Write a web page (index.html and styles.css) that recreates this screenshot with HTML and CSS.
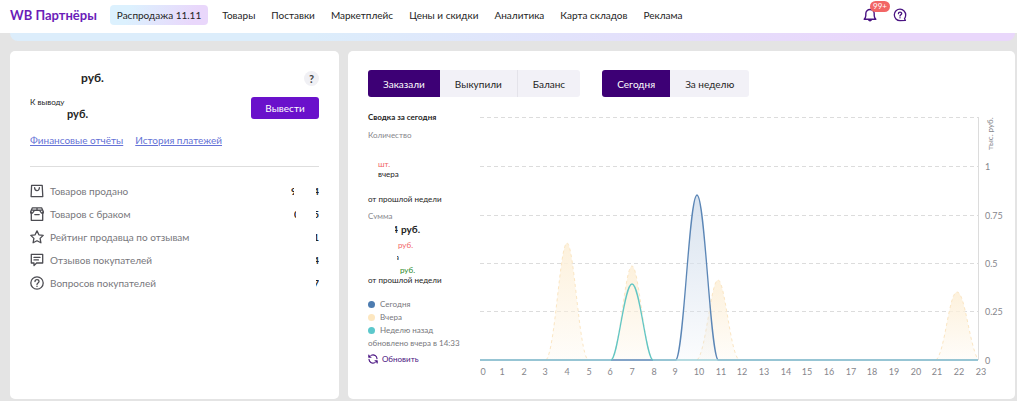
FILE: index.html
```html
<!DOCTYPE html>
<html lang="ru">

<head>
  <meta charset="UTF-8" />
  <meta name="viewport" content="width=device-width, initial-scale=1.0" />
  <title>WB Партнёры</title>
  <link rel="stylesheet" href="styles.css">
</head>

<body>
  <header class="header">
    <a href="#" class="logo">WB Партнёры</a>
    <nav class="nav">
      <a href="#" class="nav-sale">Распродажа 11.11</a>
      <a href="#">Товары</a>
      <a href="#">Поставки</a>
      <a href="#">Маркетплейс</a>
      <a href="#">Цены и скидки</a>
      <a href="#">Аналитика</a>
      <a href="#">Карта складов</a>
      <a href="#">Реклама</a>
    </nav>
    <div class="header-actions">
      <button class="icon-button" aria-label="Уведомления">
        <svg width="14" height="14" viewBox="0 0 14 14" fill="none" stroke="#4a1482" stroke-width="1.4" stroke-linejoin="round">
          <path d="M1.2 11.3C2.3 10.2 2.8 9.2 2.8 7.6V5.7C2.8 3.2 4.6 1.5 7 1.5S11.2 3.2 11.2 5.7V7.6C11.2 9.2 11.7 10.2 12.8 11.3Z" />
          <path d="M5.4 11.8C5.6 13.4 8.4 13.4 8.6 11.8Z" fill="#4a1482" stroke-width="1" />
        </svg>
        <span class="badge">99+</span>
      </button>
      <button class="icon-button" aria-label="Помощь">
        <svg width="14" height="14" viewBox="0 0 14 14" fill="none" stroke="#4a1482" stroke-width="1.3" stroke-linejoin="round" stroke-linecap="round">
          <path d="M12.4 12.4L7 12.6A5.7 5.7 0 1 1 12.7 7C12.7 8.6 12.2 9.8 11.5 10.8Z" />
          <path d="M5.4 5.7C5.4 3.5 8.7 3.6 8.7 5.6C8.7 6.8 7 6.9 7 8.1M7 9.7V9.8" />
        </svg>
      </button>
    </div>
  </header>

  <div class="banner"></div>

  <main class="main">
    <section class="card finance">
      <div class="balance">
        <span class="balance-total">руб.</span>
        <button class="hint" aria-label="Подсказка">?</button>
      </div>
      <div class="payout">
        <div>
          <p class="payout-label">К выводу</p>
          <p class="payout-sum">руб.</p>
        </div>
        <button class="payout-button">Вывести</button>
      </div>
      <div class="links">
        <a href="#">Финансовые отчёты</a>
        <a href="#">История платежей</a>
      </div>
      <ul class="stats">
        <li>
          <svg class="stat-icon" viewBox="0 0 14 14">
            <path d="M1.6 1.3H12.2L12.8 12.6H1.1Z" />
            <path d="M4.6 3.6C4.6 7.6 9.4 7.6 9.4 3.6" />
          </svg>
          <span class="stat-name">Товаров продано</span>
          <span class="digit digit-wide">9</span><span class="digit">4</span>
        </li>
        <li>
          <svg class="stat-icon" viewBox="0 0 14 14">
            <path d="M1.3 5V13.3H12.7V5M0.7 4.6L2.4 0.8H11.6L13.3 4.6V6H11.4L9.6 3.4H4.4L2.6 6H0.7ZM2 3.2H12M7 0.8V3.2M4.8 7.6H9.2" />
          </svg>
          <span class="stat-name">Товаров с браком</span>
          <span class="digit digit-near">0</span><span class="digit">5</span>
        </li>
        <li>
          <svg class="stat-icon" viewBox="0 0 14 14">
            <path d="M7 0.9L8.9 4.8L13.2 5.4L10.1 8.4L10.9 12.8L7 10.7L3.1 12.8L3.9 8.4L0.8 5.4L5.1 4.8Z" />
          </svg>
          <span class="stat-name">Рейтинг продавца по отзывам</span>
          <span class="digit">1</span>
        </li>
        <li>
          <svg class="stat-icon" viewBox="0 0 14 14">
            <path d="M1.3 1.3H12.7V10H6.6L4 12.6V10H1.3ZM4 4.4H10M4 6.9H8.4" />
          </svg>
          <span class="stat-name">Отзывов покупателей</span>
          <span class="digit">4</span>
        </li>
        <li>
          <svg class="stat-icon" viewBox="0 0 14 14">
            <circle cx="7" cy="7" r="6.2" />
            <path d="M5 5.6C5 3 9 3.1 9 5.5C9 7 7 7 7 8.4M7 10.2V10.4" />
          </svg>
          <span class="stat-name">Вопросов покупателей</span>
          <span class="digit">7</span>
        </li>
      </ul>
    </section>

    <section class="card report">
      <div class="tabs">
        <div class="tab-group">
          <button class="tab active">Заказали</button>
          <button class="tab">Выкупили</button>
          <button class="tab divided">Баланс</button>
        </div>
        <div class="tab-group">
          <button class="tab active">Сегодня</button>
          <button class="tab">За неделю</button>
        </div>
      </div>

      <div class="report-body">
        <div class="summary">
          <h2 class="summary-title">Сводка за сегодня</h2>
          <p class="muted">Количество</p>
          <div class="count">
            <p class="down">шт.</p>
            <p>вчера</p>
          </div>
          <p class="compare">от прошлой недели</p>
          <p class="muted sum-label">Сумма</p>
          <p class="sum"><span class="digit">4</span>руб.</p>
          <div class="diff">
            <p class="down">руб.</p>
            <p class="cut-word">вчера</p>
            <p class="up">руб.</p>
          </div>
          <p class="compare-sum">от прошлой недели</p>
          <ul class="legend">
            <li class="today">Сегодня</li>
            <li class="yesterday">Вчера</li>
            <li class="week">Неделю назад</li>
          </ul>
          <p class="updated">обновлено вчера в 14:33</p>
          <button class="refresh">
            <svg width="10" height="10" viewBox="0 0 10 10" fill="none" stroke="#4a1482" stroke-width="1.1" stroke-linecap="round" stroke-linejoin="round">
              <path d="M3.4 1.2C6.2 0.2 8.8 2 9 4.6M6.6 8.8C3.8 9.8 1.2 8 1 5.4M0.8 1V3.2H3M0.9 3.1L2.2 1.8M9.2 9V6.8H7M9.1 6.9L7.8 8.2" />
            </svg>
            Обновить
          </button>
        </div>

        <svg class="chart" viewBox="0 0 525 272" role="img" aria-label="Заказы по часам">
          <defs>
            <linearGradient id="fill-yesterday" x1="0" y1="0" x2="0" y2="1">
              <stop offset="0" stop-color="#fdf1dc" />
              <stop offset="1" stop-color="#fdf1dc" stop-opacity="0.15" />
            </linearGradient>
            <linearGradient id="fill-today" x1="0" y1="0" x2="0" y2="1">
              <stop offset="0" stop-color="#d9e3ef" />
              <stop offset="1" stop-color="#d9e3ef" stop-opacity="0.1" />
            </linearGradient>
          </defs>
          <g class="grid">
            <path d="M0 10.5H498M0 59.5H498M0 108.5H498M0 156.5H498M0 204.5H498" />
          </g>
          <path class="axis" d="M498.5 10V253" />

          <g class="area-yesterday">
            <path d="M66 253C75 246 80 136 87 136S99 246 108 253" />
            <path d="M131 253C140 246 145 159 152 159S164 246 173 253" />
            <path d="M217 253C226 246 231 173 238 173S250 246 259 253" />
            <path d="M456 253C465 246 469 185 477 185S489 236 498 253" />
          </g>
          <path class="area-today" d="M196 253C204 246 209 88 217 88S230 246 238 253" />
          <path class="line-today" d="M0 253H196C204 246 209 88 217 88S230 246 238 253H498" />
          <path class="line-week" d="M131 253C138 252 144 177 152 177S166 252 173 253" />
          <path class="line-base" d="M0 253H131M173 253H498" />

          <g class="hours">
            <text x="3" y="268">0</text>
            <text x="22" y="268">1</text>
            <text x="44" y="268">2</text>
            <text x="65" y="268">3</text>
            <text x="87" y="268">4</text>
            <text x="109" y="268">5</text>
            <text x="130" y="268">6</text>
            <text x="152" y="268">7</text>
            <text x="174" y="268">8</text>
            <text x="195" y="268">9</text>
            <text x="219" y="268">10</text>
            <text x="241" y="268">11</text>
            <text x="262" y="268">12</text>
            <text x="284" y="268">13</text>
            <text x="306" y="268">14</text>
            <text x="327" y="268">15</text>
            <text x="349" y="268">16</text>
            <text x="371" y="268">17</text>
            <text x="392" y="268">18</text>
            <text x="414" y="268">19</text>
            <text x="436" y="268">20</text>
            <text x="457" y="268">21</text>
            <text x="479" y="268">22</text>
            <text x="501" y="268">23</text>
          </g>
          <g class="scale">
            <text x="505" y="63">1</text>
            <text x="505" y="112">0.75</text>
            <text x="505" y="160">0.5</text>
            <text x="505" y="208">0.25</text>
            <text x="505" y="257">0</text>
            <text class="unit" transform="translate(513 43) rotate(-90)">тыс. руб.</text>
          </g>
        </svg>
      </div>
    </section>
  </main>
</body>

</html>
```

FILE: styles.css
```css
* {
  box-sizing: border-box;
}

body {
  margin: 0;
  background-color: #e4e4e4;
  font-family: Lato, "Noto Sans", sans-serif;
  font-size: 8px;
  line-height: 12px;
  color: #242424;
}

p,
h2,
ul {
  margin: 0;
  padding: 0;
}

ul {
  list-style: none;
}

button {
  font-family: inherit;
  border: none;
  padding: 0;
  cursor: pointer;
}

/* header */
.header {
  display: flex;
  align-items: center;
  height: 33px;
  padding: 0 110px 3px 10px;
  background-color: #fff;
}

.logo {
  font-size: 13px;
  font-weight: 700;
  color: #6a1cb8;
  text-decoration: none;
}

.nav {
  display: flex;
  align-items: center;
  gap: 16px;
  margin-left: 13px;
  font-size: 10px;
  white-space: nowrap;
}

.nav a {
  color: #242424;
  text-decoration: none;
}

.nav .nav-sale {
  padding: 4px 7px;
  margin-right: -2px;
  border-radius: 4px;
  background: linear-gradient(110deg, #dcf1fe 20%, #e9d7fb 85%);
}

.header-actions {
  display: flex;
  gap: 16px;
  margin-left: auto;
}

.icon-button {
  position: relative;
  display: flex;
  background: none;
}

.badge {
  position: absolute;
  top: -7px;
  left: 7px;
  padding: 0 3px;
  border-radius: 6px;
  background-color: #f26666;
  color: #fff;
  font-size: 8px;
  line-height: 11px;
}

.banner {
  height: 8px;
  margin: 0 2px 0 10px;
  border-radius: 0 0 8px 8px;
  background: linear-gradient(90deg, #dcedfb 30%, #e9d7fb 85%);
}

/* cards */
.main {
  display: grid;
  grid-template-columns: 329fr 667fr;
  gap: 9px;
  padding: 10px 2px 3px 10px;
}

.card {
  border-radius: 5px;
  background-color: #fff;
}

.finance {
  padding: 19px 20px;
}

.balance {
  display: flex;
  align-items: center;
  justify-content: space-between;
}

.balance-total {
  padding-left: 51px;
  font-size: 12px;
  line-height: 16px;
  font-weight: 700;
}

.hint {
  width: 15px;
  height: 15px;
  border-radius: 50%;
  background-color: #f0f0f4;
  color: #444;
  font-size: 11px;
  font-weight: 700;
  line-height: 15px;
}

.payout {
  display: flex;
  align-items: center;
  justify-content: space-between;
  margin-top: 10px;
}

.payout-sum {
  padding-left: 37px;
  font-size: 11px;
  font-weight: 700;
}

.payout-button {
  width: 68px;
  height: 22px;
  border-radius: 3px;
  background-color: #6a11cb;
  color: #fff;
  font-size: 10px;
}

.links {
  display: flex;
  gap: 12px;
  padding: 14px 0 20px;
  border-bottom: 1px solid #dedede;
  font-size: 10px;
}

.links a {
  color: #6572d6;
}

.stats {
  padding-top: 12px;
  font-size: 10px;
  color: #77777c;
}

.stats li {
  display: flex;
  align-items: center;
  height: 23px;
}

.stat-icon {
  width: 14px;
  height: 14px;
  margin-right: 6px;
  fill: none;
  stroke: #4c4c52;
  stroke-width: 1.3;
  stroke-linejoin: round;
  stroke-linecap: round;
}

.stat-name {
  margin-right: auto;
}

/* numbers are hidden except for their edges */
.digit {
  display: flex;
  justify-content: flex-end;
  width: 3px;
  overflow: hidden;
  color: #242424;
  font-weight: 700;
}

.digit-wide,
.digit-near {
  justify-content: flex-start;
  margin-right: 22px;
}

.digit-near {
  width: 2px;
  margin-right: 20px;
}

/* report */
.report {
  padding: 19px 10px 20px 20px;
}

.tabs {
  display: flex;
  gap: 22px;
}

.tab-group {
  display: flex;
  border-radius: 3px;
  overflow: hidden;
}

.tab {
  height: 27px;
  padding: 0 15px;
  background-color: #f2f1f7;
  color: #242424;
  font-size: 10px;
}

.tab.active {
  background-color: #3d0075;
  color: #fff;
}

.tab.divided {
  border-left: 1px solid #e4e3ea;
}

.report-body {
  display: grid;
  grid-template-columns: 112px 1fr;
  align-items: start;
  padding-top: 10px;
}

.summary {
  display: flex;
  flex-direction: column;
  padding-top: 4px;
  white-space: nowrap;
}

.summary-title {
  margin-bottom: 6px;
  font-size: 8px;
  font-weight: 700;
}

.muted {
  color: #86868c;
}

.count {
  padding: 18px 0 0 10px;
  line-height: 10px;
}

.down {
  color: #f26666;
}

.up {
  color: #2c8a2c;
}

.compare {
  margin-top: 14px;
}

.sum-label {
  height: 9px;
  margin-top: 5px;
  overflow: hidden;
}

.sum {
  display: flex;
  gap: 3px;
  padding: 4px 0 3px 27px;
  font-size: 10px;
  font-weight: 700;
}

.diff {
  padding: 1px 0 0 30px;
}

.cut-word {
  display: flex;
  justify-content: flex-end;
  width: 2px;
  margin-left: -1px;
  overflow: hidden;
}

.diff .up {
  padding: 1px 0 0 2px;
}

.compare-sum {
  position: relative;
  margin-top: -2px;
}

.compare-sum::before {
  content: "";
  position: absolute;
  top: -4px;
  left: 9px;
  width: 18px;
  height: 9px;
  border-radius: 50%;
  background-color: #fff;
}

.legend {
  padding-top: 12px;
  line-height: 13px;
  color: #77777c;
}

.legend li {
  display: flex;
  align-items: center;
  gap: 5px;
}

.legend li::before {
  content: "";
  width: 7px;
  height: 7px;
  border-radius: 50%;
}

.legend .today::before {
  background-color: #4d7cb0;
}

.legend .yesterday::before {
  background-color: #fde7c0;
}

.legend .week::before {
  background-color: #5cc8cc;
}

.updated {
  color: #77777c;
}

.refresh {
  display: flex;
  align-items: center;
  gap: 4px;
  margin-top: 4px;
  background: none;
  color: #4a1482;
  font-size: 8px;
  line-height: 12px;
}

/* chart */
.chart {
  display: block;
  width: 100%;
}

.grid {
  stroke: #dcdcdc;
  stroke-dasharray: 4 3;
}

.axis {
  stroke: #dcdcdc;
}

.area-yesterday {
  fill: url(#fill-yesterday);
  stroke: #fbe6c3;
  stroke-dasharray: 3 3;
}

.area-today {
  fill: url(#fill-today);
}

.line-today,
.line-week,
.line-base {
  fill: none;
  stroke: #5b86b6;
  stroke-width: 1.3;
}

.line-week {
  stroke: #62c6c4;
}

.line-base {
  stroke: #9fcfd8;
}

.hours,
.scale {
  fill: #86868c;
  font-size: 9px;
}

.hours {
  text-anchor: middle;
}

.unit {
  font-size: 8px;
}
```
